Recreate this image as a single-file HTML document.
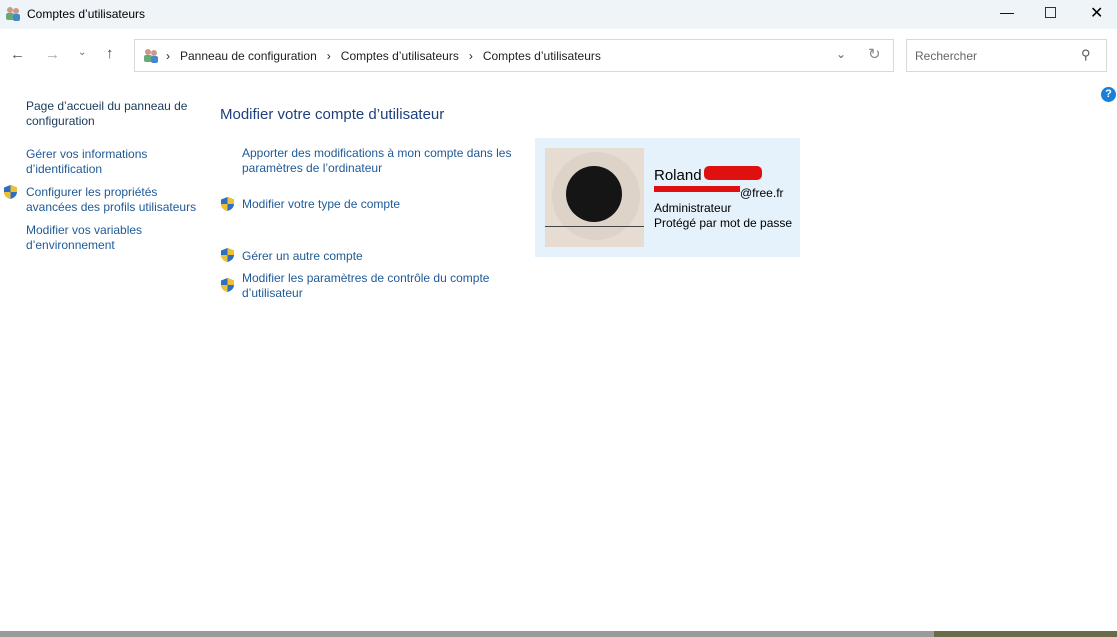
<!DOCTYPE html>
<html><head><meta charset="utf-8"><style>
*{margin:0;padding:0;box-sizing:border-box}
body{width:1117px;height:637px;overflow:hidden;background:#fff;font-family:"Segoe UI","Liberation Sans",sans-serif;font-size:12px;color:#000;position:relative}
.a{position:absolute;white-space:nowrap}
.title{left:0;top:0;width:1117px;height:29px;background:#eff4f9}
.lnk{color:#1e5a98;line-height:15px}
.bar{left:134px;top:39px;width:760px;height:33px;border:1px solid #d9d9d9;background:#fff}
.search{left:906px;top:39px;width:201px;height:33px;border:1px solid #d9d9d9}
.shield{position:absolute;width:13px;height:14px}
</style></head><body>
<div class="a title"></div>
<svg class="a" style="left:5px;top:6px" width="16" height="16"><circle cx="5" cy="4" r="3" fill="#c98"/><rect x="1" y="7" width="8" height="7" rx="2" fill="#6a7"/><circle cx="11" cy="5" r="3" fill="#c98"/><rect x="8" y="8" width="7" height="7" rx="2" fill="#48c"/></svg>
<div class="a" style="left:27px;top:7px;font-size:12px">Comptes d’utilisateurs</div>
<div class="a" style="left:1000px;top:4px;font-size:14px">&#8212;</div>
<div class="a" style="left:1045px;top:7px;width:11px;height:11px;border:1px solid #333"></div>
<div class="a" style="left:1090px;top:3px;font-size:16px">✕</div>
<div class="a" style="left:10px;top:46px;font-size:15px;color:#555">←</div>
<div class="a" style="left:45px;top:46px;font-size:15px;color:#aaa">→</div>
<div class="a" style="left:78px;top:47px;font-size:10px;color:#666">⌄</div>
<div class="a" style="left:106px;top:45px;font-size:15px;color:#444">↑</div>
<div class="a bar"></div>
<svg class="a" style="left:143px;top:48px" width="16" height="16"><circle cx="5" cy="4" r="3" fill="#c98"/><rect x="1" y="7" width="8" height="7" rx="2" fill="#6a7"/><circle cx="11" cy="5" r="3" fill="#c98"/><rect x="8" y="8" width="7" height="7" rx="2" fill="#48c"/></svg>
<div class="a" style="left:166px;top:49px;color:#222">›&nbsp;&nbsp; Panneau de configuration &nbsp;&nbsp;›&nbsp;&nbsp; Comptes d’utilisateurs &nbsp;&nbsp;›&nbsp;&nbsp; Comptes d’utilisateurs</div>
<div class="a" style="left:836px;top:47px;color:#666">⌄</div>
<div class="a" style="left:868px;top:45px;font-size:15px;color:#888">↻</div>
<div class="a search"></div>
<div class="a" style="left:915px;top:49px;color:#666">Rechercher</div>
<div class="a" style="left:1081px;top:47px;color:#555;font-size:13px">⚲</div>
<div class="a" style="left:1101px;top:87px;width:15px;height:15px;border-radius:50%;background:#1a7fd6;color:#fff;font-size:11px;font-weight:bold;text-align:center;line-height:15px">?</div>
<div class="a lnk" style="left:26px;top:99px;color:#1a3a5a">Page d’accueil du panneau de<br>configuration</div>
<div class="a lnk" style="left:26px;top:147px">Gérer vos informations<br>d’identification</div>
<div class="a lnk" style="left:26px;top:185px">Configurer les propriétés<br>avancées des profils utilisateurs</div>
<div class="a lnk" style="left:26px;top:223px">Modifier vos variables<br>d’environnement</div>
<div class="a" style="left:220px;top:106px;font-size:15px;color:#1e3f7a">Modifier votre compte d’utilisateur</div>
<div class="a lnk" style="left:242px;top:146px">Apporter des modifications à mon compte dans les<br>paramètres de l’ordinateur</div>
<div class="a lnk" style="left:242px;top:197px">Modifier votre type de compte</div>
<div class="a lnk" style="left:242px;top:249px">Gérer un autre compte</div>
<div class="a lnk" style="left:242px;top:271px">Modifier les paramètres de contrôle du compte<br>d’utilisateur</div>
<svg width="0" height="0"><defs><g id="sh"><path d="M6.5 0L13 2.5V7C13 10.5 10 13 6.5 14C3 13 0 10.5 0 7V2.5Z" fill="#2d6fc1"/><path d="M6.5 0L13 2.5V7H6.5ZM6.5 7V14C3 13 0 10.5 0 7Z" fill="#f2c02e"/></g></defs></svg>
<svg class="shield" style="left:4px;top:185px"><use href="#sh"/></svg>
<svg class="shield" style="left:221px;top:197px"><use href="#sh"/></svg>
<svg class="shield" style="left:221px;top:248px"><use href="#sh"/></svg>
<svg class="shield" style="left:221px;top:278px"><use href="#sh"/></svg>
<div class="a" style="left:535px;top:138px;width:265px;height:119px;background:#e5f1fb"></div>
<div class="a" style="left:545px;top:148px;width:99px;height:99px;background:#e6dcd2"></div>
<div class="a" style="left:552px;top:152px;width:88px;height:88px;border-radius:50%;background:#ddd3c8"></div>
<div class="a" style="left:566px;top:166px;width:56px;height:56px;border-radius:50%;background:#151515"></div>
<div class="a" style="left:545px;top:226px;width:99px;height:1px;background:#444"></div>
<div class="a" style="left:654px;top:167px;font-size:15px">Roland</div>
<div class="a" style="left:704px;top:166px;width:58px;height:14px;background:#e01010;border-radius:5px"></div>
<div class="a" style="left:654px;top:186px;width:86px;height:6px;background:#e01010"></div>
<div class="a" style="left:740px;top:186px">@free.fr</div>
<div class="a" style="left:654px;top:201px">Administrateur</div>
<div class="a" style="left:654px;top:216px">Protégé par mot de passe</div>
<div class="a" style="left:0;top:631px;width:1117px;height:6px;background:#9a9a9a"></div>
<div class="a" style="left:934px;top:631px;width:183px;height:6px;background:#6b6b4a"></div>
</body></html>
